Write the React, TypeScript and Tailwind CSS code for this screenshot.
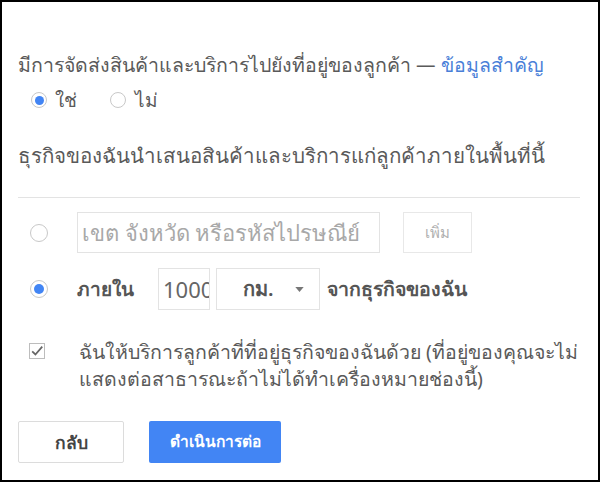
const font = { fontFamily: '"Noto Sans", "Liberation Sans", sans-serif' };

function Radio({ checked, size = 'sm' }: { checked?: boolean; size?: 'sm' | 'lg' }) {
  const box = size === 'lg' ? 'h-[18px] w-[18px]' : 'h-[16px] w-[16px]';
  const dot = size === 'lg' ? 'h-[10px] w-[10px]' : 'h-[9px] w-[9px]';
  return (
    <span
      className={`flex ${box} shrink-0 items-center justify-center rounded-full border border-[#c8c8c8] bg-white`}
    >
      {checked && <span className={`${dot} rounded-full bg-[#4285f4]`} />}
    </span>
  );
}

export default function App() {
  return (
    <div
      className="h-[482px] w-[600px] border-2 border-black bg-white text-[#5a5a5a]"
      style={font}
    >
      <div className="px-4 pt-[48px]">
        <p className="whitespace-nowrap text-[19.5px] leading-[30px]">
          มีการจัดส่งสินค้าและบริการไปยังที่อยู่ของลูกค้า —{' '}
          <span className="text-[#4a7fd8]">ข้อมูลสำคัญ</span>
        </p>
        <div className="mt-[7px] flex h-[26px] items-center pl-[13px] text-[19px]">
          <Radio checked />
          <span className="ml-[8px]">ใช่</span>
          <span className="ml-[33px]">
            <Radio />
          </span>
          <span className="ml-[9px]">ไม่</span>
        </div>

        <p className="mt-[27px] whitespace-nowrap text-[20.5px] leading-[30px]">
          ธุรกิจของฉันนำเสนอสินค้าและบริการแก่ลูกค้าภายในพื้นที่นี้
        </p>
        <div className="mt-[27px] mr-[2px] h-px bg-[#e3e3e3]" />

        <div className="mt-[14px] flex items-center">
          <span className="ml-[12px]">
            <Radio size="lg" />
          </span>
          <div className="ml-[29px] flex h-[41px] w-[303px] items-center overflow-hidden whitespace-nowrap border border-[#e3e3e3] px-[4px] text-[22px] text-[#a8a8a8]">
            เขต จังหวัด หรือรหัสไปรษณีย์
          </div>
          <div className="ml-[23px] flex h-[41px] w-[69px] items-center justify-center border border-[#e8e8e8] text-[15px] text-[#b0b0b0]">
            เพิ่ม
          </div>
        </div>

        <div className="mt-[15px] flex items-center">
          <span className="ml-[12px]">
            <Radio checked size="lg" />
          </span>
          <span className="ml-[29px] w-[81px] text-[19px] font-semibold text-[#555]">ภายใน</span>
          <div className="flex h-[42px] w-[52px] items-center overflow-hidden whitespace-nowrap border border-[#e3e3e3] pl-[4px] text-[22px] text-[#666]">
            1000
          </div>
          <div className="ml-[6px] flex h-[42px] w-[104px] items-center border border-[#e3e3e3] pl-[26px] text-[20px] font-semibold text-[#555]">
            กม.
            <svg viewBox="0 0 10 6" className="ml-auto mr-[15px] h-[5px] w-[9px]">
              <polygon points="0,0 10,0 5,6" fill="#777" />
            </svg>
          </div>
          <span className="ml-[7px] text-[19.5px] font-semibold text-[#555]">จากธุรกิจของฉัน</span>
        </div>

        <div className="mt-[28px] flex items-start">
          <span className="ml-[11px] mt-[5px] flex h-[16px] w-[16px] shrink-0 items-center justify-center border border-[#bdbdbd]">
            <svg viewBox="0 0 16 16" className="h-[14px] w-[14px]">
              <path d="M2.5 8.5 L6.2 12 L14 3" fill="none" stroke="#666" strokeWidth="2" />
            </svg>
          </span>
          <p className="ml-[34px] whitespace-nowrap text-[19.5px] leading-[27px]">
            ฉันให้บริการลูกค้าที่ที่อยู่ธุรกิจของฉันด้วย (ที่อยู่ของคุณจะไม่
            <br />
            แสดงต่อสาธารณะถ้าไม่ได้ทำเครื่องหมายช่องนี้)
          </p>
        </div>

        <div className="mt-[29px] flex items-center">
          <button className="h-[42px] w-[106px] rounded-[2px] border border-[#dcdcdc] bg-white text-[17.5px] font-semibold text-[#444]">
            กลับ
          </button>
          <button className="ml-[25px] h-[42px] w-[132px] rounded-[2px] bg-[#4285f4] text-[15.5px] font-semibold text-white">
            ดำเนินการต่อ
          </button>
        </div>
      </div>
    </div>
  );
}
